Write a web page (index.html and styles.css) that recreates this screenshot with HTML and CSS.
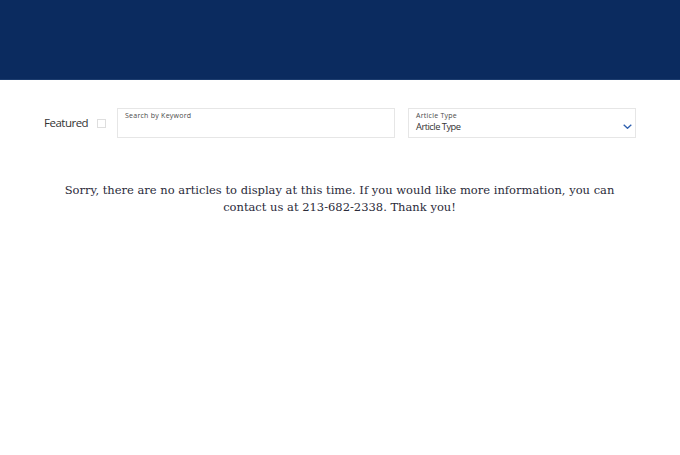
FILE: index.html
```html
<!DOCTYPE html>
<html lang="en">
<head>
<meta charset="utf-8">
<link rel="stylesheet" href="styles.css">
</head>
<body>
<header class="hero"></header>
<main class="page">
  <div class="filters">
    <label class="featured">
      <span class="featured-text">Featured</span>
      <span class="checkbox"></span>
    </label>
    <div class="field field-search">
      <span class="field-label">Search by Keyword</span>
    </div>
    <div class="field field-type">
      <span class="field-label">Article Type</span>
      <span class="field-value">Article Type</span>
      <svg class="chevron" width="9" height="5" viewBox="0 0 9 5"><path d="M0.7 0.7l3.8 3.6 3.8-3.6" fill="none" stroke="#2d5fae" stroke-width="1.3"/></svg>
    </div>
  </div>
  <p class="message">Sorry, there are no articles to display at this time. If you would like more information, you can contact us at 213-682-2338. Thank you!</p>
</main>
</body>
</html>
```
FILE: styles.css
```css
* { box-sizing: border-box; }
body { margin: 0; background: #fff; font-family: "Open Sans", sans-serif; }
.hero { height: 80px; background: #0b2b5f; border-bottom: 1px solid #1c3c6e; }
.page { padding: 28px 45px 0 44px; }
.filters { display: flex; align-items: center; }
.featured { display: flex; align-items: center; width: 73px; flex-shrink: 0; }
.featured-text { font-size: 11.5px; letter-spacing: -0.5px; color: #333; position: relative; top: -1px; }
.checkbox { width: 9px; height: 9px; border: 1px solid #dedede; margin-left: 9px; }
.field { position: relative; height: 30px; border: 1px solid #e6e6e6; padding: 1px 7px; display: flex; flex-direction: column; flex-shrink: 0; }
.field-search { width: 278px; }
.field-type { width: 228px; margin-left: 13px; }
.field-label { font-size: 7px; color: #4a4a4a; letter-spacing: 0.25px; line-height: 11px; }
.field-value { font-size: 9.3px; letter-spacing: -0.5px; color: #333; line-height: 12px; }
.chevron { position: absolute; right: 3px; top: 15px; }
.message { margin: 44px auto 0; max-width: 575px; text-align: center; font-family: "DejaVu Serif", serif; font-size: 11.5px; line-height: 17px; color: #2b2b3a; }
```
